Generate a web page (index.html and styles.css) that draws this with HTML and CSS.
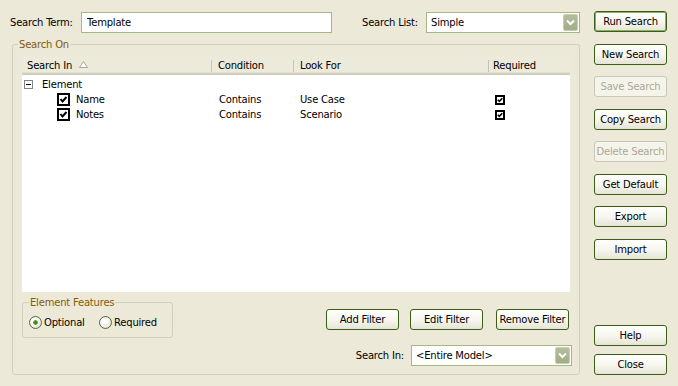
FILE: index.html
```html
<!DOCTYPE html>
<html lang="en">
<head>
    <meta charset="UTF-8">
    <title>Search</title>
    <link rel="stylesheet" href="styles.css">
</head>
<body>

<div class="dialog">
    <div class="main">
        <div class="top-row">
            <label for="term" class="lbl term-lbl">Search Term:</label>
            <input id="term" class="text" type="text" value="Template">
            <span class="lbl list-lbl">Search List:</span>
            <div class="combo combo-list">
                <span class="combo-text">Simple</span>
                <span class="drop"><svg width="9" height="7" viewBox="0 0 9 7"><polyline points="1,1.5 4.5,5 8,1.5" fill="none" stroke="#fff" stroke-width="2"/></svg></span>
            </div>
        </div>

        <fieldset class="group search-on">
            <legend>Search On</legend>

            <div class="listview">
                <div class="lv-head">
                    <div class="col c1">Search In <svg class="sort" width="9" height="7" viewBox="0 0 9 7"><polygon points="0.5,6.5 4.5,0.5 8.5,6.5" fill="#fff" stroke="#ACA899"/></svg></div>
                    <div class="col c2">Condition</div>
                    <div class="col c3">Look For</div>
                    <div class="col c4">Required</div>
                </div>
                <div class="lv-body">
                    <div class="row">
                        <div class="cell c1 parent"><span class="tog"></span>Element</div>
                        <div class="cell"></div>
                        <div class="cell"></div>
                        <div class="cell"></div>
                    </div>
                    <div class="row">
                        <div class="cell c1 child">
                            <svg class="chk" width="13" height="13" viewBox="0 0 13 13"><rect x="1" y="1" width="11" height="11" fill="#fff" stroke="#000" stroke-width="2"/><polyline points="3.5,6 5.5,8.5 9.5,4" fill="none" stroke="#000" stroke-width="2"/></svg>Name
                        </div>
                        <div class="cell c2">Contains</div>
                        <div class="cell c3">Use Case</div>
                        <div class="cell c4"><svg width="10" height="10" viewBox="0 0 10 10"><rect x="1" y="1" width="8" height="8" fill="#fff" stroke="#000" stroke-width="2"/><polyline points="2.8,4.8 4.3,6.4 7.3,3.2" fill="none" stroke="#000" stroke-width="1.6"/></svg></div>
                    </div>
                    <div class="row">
                        <div class="cell c1 child">
                            <svg class="chk" width="13" height="13" viewBox="0 0 13 13"><rect x="1" y="1" width="11" height="11" fill="#fff" stroke="#000" stroke-width="2"/><polyline points="3.5,6 5.5,8.5 9.5,4" fill="none" stroke="#000" stroke-width="2"/></svg>Notes
                        </div>
                        <div class="cell c2">Contains</div>
                        <div class="cell c3">Scenario</div>
                        <div class="cell c4"><svg width="10" height="10" viewBox="0 0 10 10"><rect x="1" y="1" width="8" height="8" fill="#fff" stroke="#000" stroke-width="2"/><polyline points="2.8,4.8 4.3,6.4 7.3,3.2" fill="none" stroke="#000" stroke-width="1.6"/></svg></div>
                    </div>
                </div>
            </div>

            <div class="filter-row">
                <fieldset class="group features">
                    <legend>Element Features</legend>
                    <div class="radios">
                        <label class="radio on first"><span class="dot"></span>Optional</label>
                        <label class="radio"><span class="dot"></span>Required</label>
                    </div>
                </fieldset>
                <div class="filter-buttons">
                    <button class="btn">Add Filter</button>
                    <button class="btn">Edit Filter</button>
                    <button class="btn">Remove Filter</button>
                </div>
            </div>

            <div class="scope-row">
                <span class="lbl">Search In:</span>
                <div class="combo combo-scope">
                    <span class="combo-text">&lt;Entire Model&gt;</span>
                    <span class="drop"><svg width="9" height="7" viewBox="0 0 9 7"><polyline points="1,1.5 4.5,5 8,1.5" fill="none" stroke="#fff" stroke-width="2"/></svg></span>
                </div>
            </div>
        </fieldset>
    </div>

    <div class="side">
        <div class="side-top">
            <button class="btn default">Run Search</button>
            <button class="btn">New Search</button>
            <button class="btn" disabled>Save Search</button>
            <button class="btn">Copy Search</button>
            <button class="btn" disabled>Delete Search</button>
            <button class="btn">Get Default</button>
            <button class="btn">Export</button>
            <button class="btn">Import</button>
        </div>
        <div class="side-bottom">
            <button class="btn">Help</button>
            <button class="btn">Close</button>
        </div>
    </div>
</div>

</body>
</html>
```

FILE: styles.css
```css
* {
    box-sizing: border-box;
}
body {
    margin: 0;
    background-color: #ECE9D8;
    font-family: "DejaVu Sans", Tahoma, sans-serif;
    font-size: 10px;
    letter-spacing: -0.2px;
    color: #000;
}
.dialog {
    display: flex;
    width: 678px;
    height: 386px;
    padding: 11px 11px 11px 10px;
}
.main {
    width: 570px;
    display: flex;
    flex-direction: column;
}

/* top row */
.top-row {
    display: flex;
    align-items: center;
    height: 21px;
    margin-top: 1px;
}
.term-lbl {
    width: 71px;
}
.text {
    width: 251px;
    height: 21px;
    border: 1px solid #A5B883;
    padding: 0 5px;
    font: inherit;
    letter-spacing: inherit;
    outline: none;
}
.list-lbl {
    margin-left: auto;
    margin-right: 8px;
}
.combo {
    display: flex;
    align-items: center;
    height: 21px;
    border: 1px solid #A5B883;
    background: #fff;
    padding: 1px;
}
.combo-text {
    flex: 1;
    padding-left: 3px;
}
.combo-list {
    width: 154px;
}
.drop {
    width: 15px;
    height: 17px;
    display: flex;
    align-items: center;
    justify-content: center;
    border: 1px solid #C6CFB2;
    border-radius: 2px;
    background: linear-gradient(#B4BE9A, #A2AD88);
}

/* group boxes */
.group {
    border: 1px solid #D0D0BF;
    border-radius: 3px;
    margin: 0;
    min-width: 0;
}
.group legend {
    color: #855A08;
    line-height: 13px;
    padding: 0 1px;
}
.search-on {
    flex: 1;
    margin: 5px 0 0 2px;
    padding: 5px 9px 8px 9px;
    display: flex;
    flex-direction: column;
}
.search-on > legend {
    margin-left: -4px;
}

/* list view */
.listview {
    height: 236px;
    background: #fff;
    flex-shrink: 0;
}
.lv-head {
    display: grid;
    grid-template-columns: 190px 82px 195px 79px;
    height: 19px;
    background: #EBEADB;
    box-shadow: inset 0 -1px #CBC7B8, inset 0 -2px #D6D2C2, inset 0 -3px #E2DECD;
}
.col {
    display: flex;
    align-items: center;
    padding-left: 6px;
    padding-bottom: 1px;
    background: linear-gradient(#C7C5B2, #C7C5B2) right 4px / 1px 12px no-repeat;
}
.lv-head .c1 {
    padding-left: 5px;
}
.lv-head .c4 {
    background: none;
    padding-left: 4px;
}
.sort {
    margin-left: 7px;
    margin-top: -1px;
}
.lv-body {
    padding-top: 2px;
}
.row {
    display: grid;
    grid-template-columns: 190px 82px 195px 79px;
    height: 15px;
}
.cell {
    display: flex;
    align-items: center;
    padding-left: 7px;
}
.cell.c3, .cell.c4 {
    padding-left: 6px;
}
.parent {
    padding-left: 2px;
}
.tog {
    width: 9px;
    height: 9px;
    border: 1px solid #848484;
    margin-right: 9px;
    background: linear-gradient(#000, #000) center / 5px 1px no-repeat #fff;
}
.child {
    padding-left: 35px;
}
.chk {
    margin-right: 6px;
}

/* filter row */
.filter-row {
    display: flex;
    align-items: flex-start;
}
.features {
    width: 151px;
    margin-top: 4px;
    padding: 7px 6px 8px 6px;
}
.radios {
    display: flex;
    height: 13px;
    align-items: center;
}
.radio {
    display: flex;
    align-items: center;
}
.radio.first {
    width: 70px;
}
.dot {
    width: 13px;
    height: 13px;
    border-radius: 50%;
    border: 1px solid #56683F;
    margin-right: 2px;
    background: radial-gradient(circle at 40% 40%, #FFFFFF 20%, #DEDBCB 90%);
}
.radio.on .dot {
    background: radial-gradient(circle, #3F7E1E 0, #5A9A2E 2px, transparent 2.6px),
                radial-gradient(circle at 40% 40%, #FFFFFF 20%, #DEDBCB 90%);
}
.filter-buttons {
    display: flex;
    gap: 11px;
    margin-left: auto;
    margin-top: 17px;
    margin-right: 1px;
}
.filter-buttons .btn:last-child {
    margin-left: 2px;
}

/* bottom scope row */
.scope-row {
    display: flex;
    align-items: center;
    justify-content: flex-end;
    margin-top: 7px;
    margin-right: -2px;
}
.scope-row .lbl {
    margin-right: 7px;
}
.combo-scope {
    width: 161px;
}

/* side buttons */
.side {
    width: 73px;
    margin-left: 14px;
    display: flex;
    flex-direction: column;
    justify-content: space-between;
}
.side-top, .side-bottom {
    display: flex;
    flex-direction: column;
}
.side-top .btn:nth-child(even) {
    margin-top: 12px;
}
.side-top .btn:nth-child(odd) {
    margin-top: 11px;
}
.side-top .btn:first-child {
    margin-top: 0;
}
.side-bottom .btn + .btn {
    margin-top: 8px;
}
.btn {
    width: 73px;
    height: 21px;
    padding: 0;
    border: 1px solid #3B5E17;
    border-radius: 3px;
    background: linear-gradient(#FFFFFD, #F6F5EE 55%, #E6E4D6);
    font: inherit;
    letter-spacing: inherit;
    color: #000;
    white-space: nowrap;
}
.btn.default {
    box-shadow: inset 0 0 0 1px #8FAE66;
}
.btn:disabled {
    border-color: #C9C7BA;
    background: #F5F4EA;
    color: #ACA899;
}
```
